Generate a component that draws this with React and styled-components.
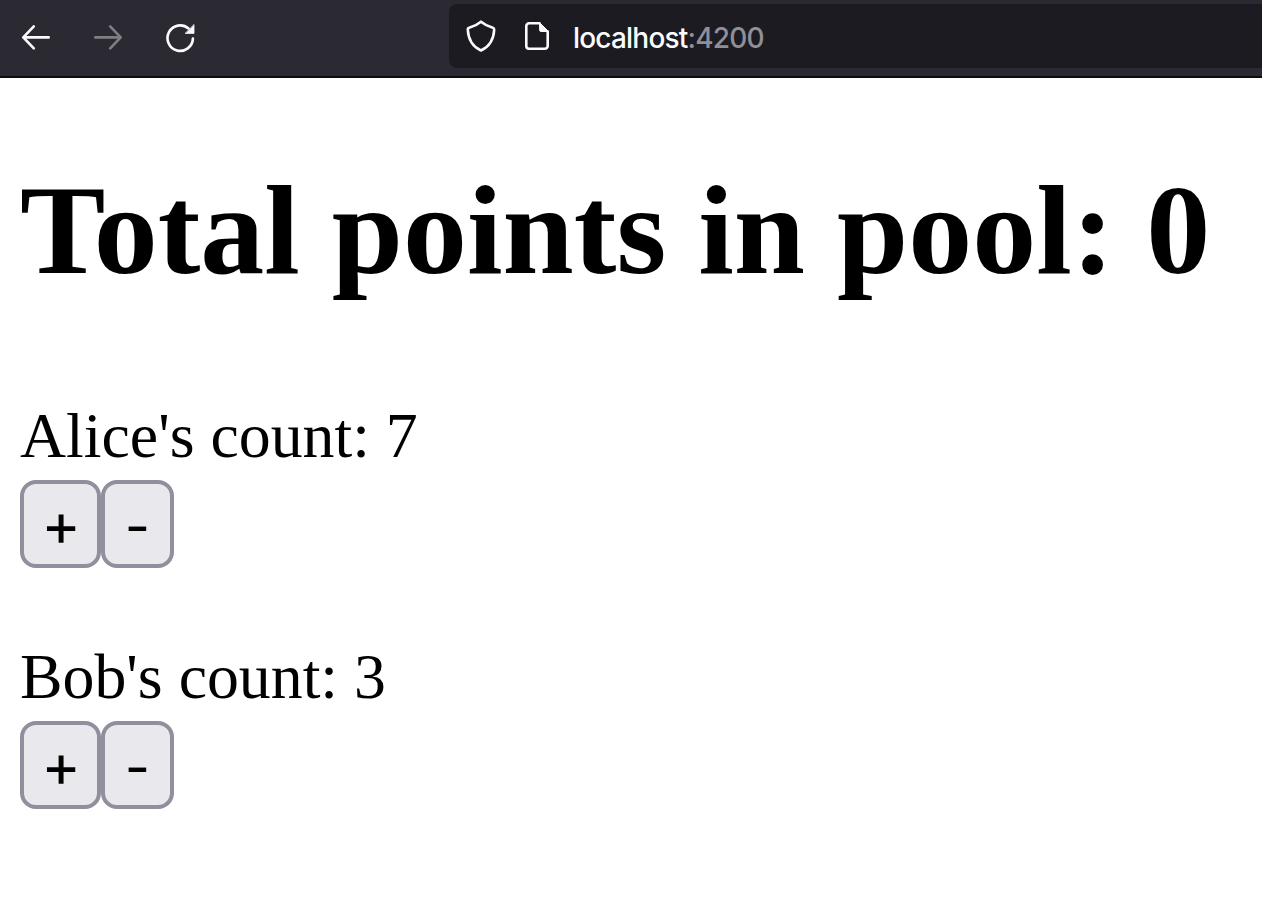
import React, { useState } from "react";
import styled, { createGlobalStyle } from "styled-components";

const GlobalStyle = createGlobalStyle`
  * { box-sizing: border-box; }
  body {
    margin: 0;
    background: #fff;
    color: #000;
    overflow: hidden;
    font-family: "Liberation Serif", "Times New Roman", serif;
  }
`;

const Window = styled.div`
  height: 924px;
  overflow: hidden;
`;

const Toolbar = styled.header`
  display: flex;
  height: 78px;
  padding: 4px 0 8px 20px;
  background: #2b2a33;
  border-bottom: 2px solid #0c0c0d;
`;

const Navigation = styled.nav`
  display: flex;
  align-items: center;
  gap: 40px;
  width: 429px;
  height: 66px;
`;

const Icon = styled.svg`
  display: block;
  flex: none;
  width: 32px;
  height: 32px;
  fill: none;
  stroke: #fbfbfe;
  stroke-width: 2.6;
  stroke-linecap: round;
  stroke-linejoin: round;
  opacity: ${(p) => (p.$disabled ? 0.4 : 1)};
`;

const AddressBar = styled.div`
  display: flex;
  align-items: center;
  flex: 1;
  height: 64px;
  padding-left: 16px;
  gap: 24px;
  background: #1c1b22;
  border-radius: 8px 0 0 8px;
`;

const Address = styled.span`
  margin-left: -4px;
  padding-top: 3px;
  color: #fbfbfe;
  font: 450 28px/34px Inter, sans-serif;
  letter-spacing: -0.8px;
  white-space: nowrap;
`;

const Port = styled.span`
  color: #8f8f98;
`;

const Page = styled.main`
  padding: 78px 20px 0;
`;

const Title = styled.h1`
  margin: 0;
  font-size: 128px;
  line-height: 148px;
  font-weight: 700;
  white-space: nowrap;
`;

const Counters = styled.div`
  padding-top: 95px;
`;

const Counter = styled.section`
  height: 241px;
`;

const CountLabel = styled.div`
  font-size: 63.8px;
  line-height: 74px;
  height: 81px;
  white-space: nowrap;
`;

const ButtonRow = styled.div`
  display: flex;
`;

const StepButton = styled.button`
  display: flex;
  align-items: center;
  justify-content: center;
  width: ${(p) => (p.$wide ? 81 : 73)}px;
  height: 88px;
  padding: ${(p) => (p.$wide ? "0 0 0 1px" : "4px 0 0")};
  border: 4px solid #8f8f9d;
  border-radius: 16px;
  background: #e9e9ed;
  color: #000;
  font: 400 ${(p) => (p.$wide ? 60 : 55)}px/64px Inter, sans-serif;
`;

function CounterPanel({ name, count, onChange }) {
  return (
    <Counter>
      <CountLabel>{name}'s count: {count}</CountLabel>
      <ButtonRow>
        <StepButton $wide onClick={() => onChange(1)}>+</StepButton>
        <StepButton onClick={() => onChange(-1)}>-</StepButton>
      </ButtonRow>
    </Counter>
  );
}

export default function App() {
  const [alice, setAlice] = useState(7);
  const [bob, setBob] = useState(3);

  return (
    <Window>
      <GlobalStyle />
      <Toolbar>
        <Navigation>
          <Icon viewBox="0 0 32 32">
            <path d="M28.7 16.4H3.3M13.8 5.4L3.3 16.4l10.5 11" />
          </Icon>
          <Icon viewBox="0 0 32 32" $disabled>
            <path d="M3.3 16.4h25.4M18.2 5.4l10.5 11-10.5 11" />
          </Icon>
          <Icon viewBox="0 0 32 32">
            <path d="M24.5 7.5A12.7 12.7 0 1 0 28.9 17.6" />
            <path d="M30 3.9v8.500h-8.500z" fill="#fbfbfe" strokeWidth="0.8" />
          </Icon>
        </Navigation>
        <AddressBar>
          <Icon viewBox="0 0 32 32">
            <path d="M16 1.7c-3.8 3.1-8 5-11.8 6.1-1 .3-1.5 1-1.4 2C3.3 19 7 26.5 16 30.5 25 26.5 28.7 19 29.2 9.8c.1-1-.4-1.7-1.4-2C24 6.7 19.8 4.8 16 1.7z" />
          </Icon>
          <Icon viewBox="0 0 32 32">
            <path d="M18.5 3.3H8A2.7 2.7 0 0 0 5.3 6v20A2.7 2.7 0 0 0 8 28.7h16A2.7 2.7 0 0 0 26.7 26V11.5" />
            <path d="M18.7 2.7l8.8 8.8H19.7a1 1 0 0 1-1-1z" fill="#fbfbfe" strokeWidth="1" />
          </Icon>
          <Address>localhost<Port>:4200</Port></Address>
        </AddressBar>
      </Toolbar>
      <Page>
        <Title>Total points in pool: {10 - alice - bob}</Title>
        <Counters>
          <CounterPanel name="Alice" count={alice} onChange={(n) => setAlice(alice + n)} />
          <CounterPanel name="Bob" count={bob} onChange={(n) => setBob(bob + n)} />
        </Counters>
      </Page>
    </Window>
  );
}
